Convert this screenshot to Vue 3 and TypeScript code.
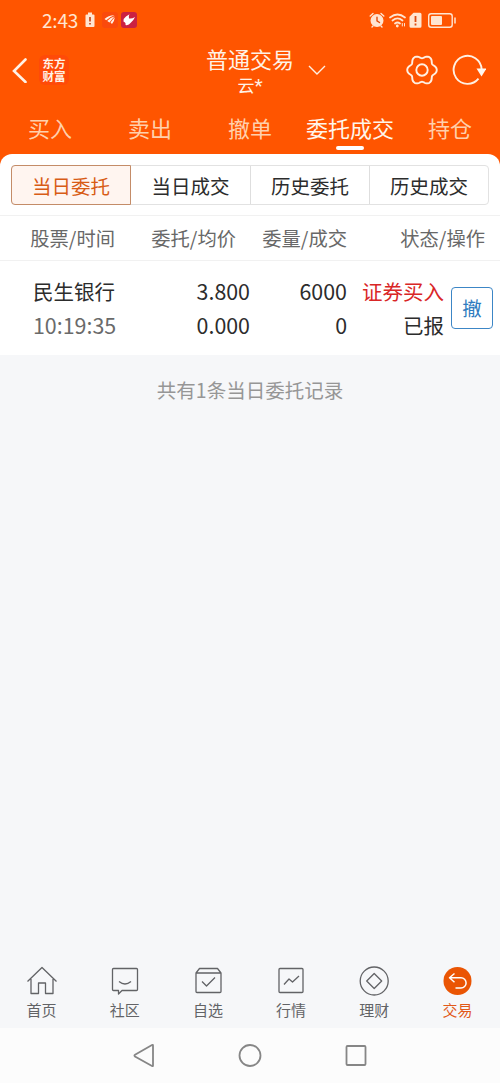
<script setup lang="ts">
interface Tab { label: string; active?: boolean }
interface NavItem { label: string; icon: string; active?: boolean }

const tabs: Tab[] = [
  { label: '买入' },
  { label: '卖出' },
  { label: '撤单' },
  { label: '委托成交', active: true },
  { label: '持仓' },
]
const segments: Tab[] = [
  { label: '当日委托', active: true },
  { label: '当日成交' },
  { label: '历史委托' },
  { label: '历史成交' },
]
const orders = [
  { name: '民生银行', time: '10:19:35', price: '3.800', avg: '0.000', amount: '6000', filled: '0', side: '证券买入', status: '已报' },
]
const nav: NavItem[] = [
  { label: '首页', icon: 'home' },
  { label: '社区', icon: 'chat' },
  { label: '自选', icon: 'box' },
  { label: '行情', icon: 'chart' },
  { label: '理财', icon: 'coin' },
  { label: '交易', icon: 'trade', active: true },
]

// Six-lobed outline of the settings gear, centred on (16, 16)
const gearOutline = 'M' + Array.from({ length: 120 }, (_, i) => {
  const a = (i * Math.PI) / 60
  const r = 13.4 + 1.5 * Math.cos(6 * a) - 0.15 * Math.cos(12 * a)
  return `${(16 + r * Math.cos(a)).toFixed(2)} ${(16 + r * Math.sin(a)).toFixed(2)}`
}).join('L') + 'z'
</script>

<template>
  <div class="screen">
    <header class="top">
      <div class="status">
        <div class="status-left">
          <span class="clock">2:43</span>
          <svg class="s-batt" width="10" height="16" viewBox="0 0 10 16">
            <path d="M3 0.5h4v2h1.500a1 1 0 0 1 1 1v10.500a1 1 0 0 1-1 1h-7a1 1 0 0 1-1-1v-10.500a1 1 0 0 1 1-1h1.500z" fill="#ffe6d2" />
            <path d="M5 5v4.500M5 11v1.600" stroke="#c23c10" stroke-width="1.600" />
          </svg>
          <svg class="s-app" width="16" height="16" viewBox="0 0 16 16">
            <rect width="16" height="16" rx="3" fill="#fa4a0c" />
            <path d="M2.500 7Q6 3.300 12.500 3.200Q7.500 4.800 4.200 8.200zM5.200 9Q8.500 5.500 12.700 4.200Q10 7 7.500 10.500zM8.500 10.500Q10.500 7.500 12.800 5.200Q12.500 9 10 12z" fill="#fff0e4" />
          </svg>
          <svg class="s-app2" width="16" height="16" viewBox="0 0 16 16">
            <rect width="16" height="16" rx="3" fill="#cb2142" />
            <path d="M2.500 9.500Q2.500 6 5 4.500L8.500 2.200Q7 4.500 8 6.500Q11 7 14 5Q12.500 8.500 10 10.500Q7.500 13.800 4.500 13Q5 11.500 4 10.500z" fill="#fff" />
          </svg>
        </div>
        <svg class="status-right" width="90" height="18" viewBox="0 0 90 18">
          <g stroke="#ffe6d2" fill="none" stroke-width="1.400" stroke-linecap="round">
            <circle cx="8" cy="9.500" r="5.800" fill="#ffe6d2" />
            <path d="M1.200 5L4 2.400M14.800 5L12 2.400M4 15l-1 1M12 15l1 1" />
            <path d="M8 6.200V9.800L10.500 11.500" stroke="#e34b0a" />
            <path d="M21 6.500Q28.500 0.500 36 6.500M23.500 9.500Q28.500 5.200 33.500 9.500M26 12.500Q28.500 10.500 31 12.500" stroke-width="1.700" />
            <circle cx="28.300" cy="15" r=".7" fill="#ffe6d2" />
            <path d="M33.300 12.500v2.500M35.500 12.500v2.500" stroke-width="1" />
          </g>
          <path d="M44.500 1.800h6.500a1.500 1.500 0 0 1 1.500 1.500v12a1.500 1.500 0 0 1-1.500 1.500h-9a1.500 1.500 0 0 1-1.500-1.500v-9.500z" fill="#ffe6d2" />
          <path d="M46.500 5v6M46.500 12.500v2" stroke="#dc4a10" stroke-width="1.800" />
          <rect x="59.700" y="2.700" width="23.500" height="13.500" rx="2.500" fill="none" stroke="#ffe6d2" stroke-width="1.400" />
          <rect x="62" y="5" width="11" height="9" rx="1" fill="#ffe6d2" />
          <path d="M86 6.500v6" stroke="#ffe6d2" stroke-width="1.500" />
        </svg>
      </div>

      <div class="titlebar">
        <div class="brand">
          <svg width="17" height="26" viewBox="0 0 17 26"><path d="M14.500 2.500L3 14L14.500 25" fill="none" stroke="#fff2e6" stroke-width="2.600" stroke-linecap="round" /></svg>
          <div class="logo">东方财富</div>
        </div>
        <div class="title"><span class="t1">普通交易</span><span class="t2">云<i>*</i></span></div>
        <svg class="chev" width="18" height="11" viewBox="0 0 18 11"><path d="M1 1L9 9L17 1" fill="none" stroke="#fff0e2" stroke-width="1.400" /></svg>
        <div class="tools">
          <svg width="32" height="32" viewBox="0 0 32 32" fill="none" stroke="#fff0e2" stroke-width="1.900" stroke-linejoin="round">
            <path :d="gearOutline" />
            <circle cx="16" cy="16" r="5.700" />
          </svg>
          <svg width="34" height="32" viewBox="0 0 34 32">
            <path d="M26.500 24.700A14 14 0 1 1 29.600 15" fill="none" stroke="#fff0e2" stroke-width="1.900" />
            <path d="M24.500 14.500h10l-5 8z" fill="#fff8f0" />
          </svg>
        </div>
      </div>

      <nav class="tabs">
        <div v-for="t in tabs" :key="t.label" class="tab" :class="{ active: t.active }">{{ t.label }}</div>
      </nav>
    </header>

    <main class="sheet">
      <div class="segments">
        <div v-for="s in segments" :key="s.label" class="segment" :class="{ active: s.active }">{{ s.label }}</div>
      </div>
      <div class="cols">
        <span>股票/时间</span><span>委托/均价</span><span>委量/成交</span><span>状态/操作</span>
      </div>
      <div v-for="o in orders" :key="o.time" class="order">
        <div class="cell name"><span>{{ o.name }}</span><span class="num muted">{{ o.time }}</span></div>
        <div class="cell num"><span>{{ o.price }}</span><span>{{ o.avg }}</span></div>
        <div class="cell num"><span>{{ o.amount }}</span><span>{{ o.filled }}</span></div>
        <div class="cell"><span class="red">{{ o.side }}</span><span>{{ o.status }}</span></div>
        <button class="cancel">撤</button>
      </div>
    </main>

    <p class="summary">共有{{ orders.length }}条当日委托记录</p>

    <footer class="bottom">
      <div v-for="n in nav" :key="n.label" class="item" :class="{ active: n.active }">
        <svg width="32" height="32" viewBox="0 0 32 32" fill="none" stroke="currentColor" stroke-width="1.300" stroke-linejoin="round">
          <template v-if="n.icon === 'home'">
            <path d="M1.500 16.500L16 2.500L30.500 16.500M5 14V28.500H12.500V18H19.500V28.500H27V14" />
          </template>
          <template v-else-if="n.icon === 'chat'">
            <path d="M4.500 3.500H27.500Q28.500 3.500 28.500 4.500V24.500Q28.500 25.500 27.500 25.500H13L9.500 29V25.500H4.500Q3.500 25.500 3.500 24.500V4.500Q3.500 3.500 4.500 3.500z" />
            <path d="M10 16.500Q16 21.500 22 16.500" />
          </template>
          <template v-else-if="n.icon === 'box'">
            <path d="M4 8L7.500 3.500H25.500L29 8V26.500Q29 27.500 28 27.500H5Q4 27.500 4 26.500zM4 8H29M10 16.500L14.500 21L23 12.500" />
          </template>
          <template v-else-if="n.icon === 'chart'">
            <rect x="4" y="3.500" width="24" height="24" rx="1" />
            <path d="M9 19.500L14 14L17.500 17L24 11" />
          </template>
          <template v-else-if="n.icon === 'coin'">
            <circle cx="16.200" cy="16" r="14" />
            <path d="M16.200 8.500L23.700 16L16.200 23.500L8.700 16z" />
          </template>
          <template v-else>
            <circle cx="16.500" cy="16" r="14" fill="#ea5504" stroke="none" />
            <path d="M13.500 8.500L8.500 12.800L13.500 17.200M8.500 12.800H20A5 5 0 0 1 20 23H14.500" stroke="#fff" stroke-width="1.500" />
          </template>
        </svg>
        <span>{{ n.label }}</span>
      </div>
    </footer>

    <div class="system">
      <svg width="24" height="26" viewBox="0 0 24 26"><path d="M21 3.500V23.500Q21 24.500 20 24L3 14.500Q1.800 13.500 3 12.700L20 3Q21 2.500 21 3.500z" /></svg>
      <svg width="24" height="26" viewBox="0 0 24 26"><circle cx="12" cy="13.500" r="10.500" /></svg>
      <svg width="24" height="26" viewBox="0 0 24 26"><rect x="2.500" y="4" width="19" height="19" rx="1" /></svg>
    </div>
  </div>
</template>

<style>
body { margin: 0; }
</style>

<style scoped>
.screen {
  width: 500px;
  height: 1083px;
  display: flex;
  flex-direction: column;
  overflow: hidden;
  background: #f6f7f9;
  color: #2c2c2c;
  font-family: "Noto Sans CJK SC", sans-serif;
}
.screen * { box-sizing: border-box; }
.top {
  height: 170px;
  flex: none;
  background: #ff5500;
  color: #fff2e6;
}
.status {
  height: 40px;
  display: flex;
  justify-content: space-between;
  padding: 0 41px 0 42px;
  align-items: center;
}
.status-left { display: flex; align-items: center; }
.clock { font-size: 19px; line-height: 40px; width: 43px; color: #ffe6d2; letter-spacing: -0.200px; }
.s-app { margin-left: 7px; }
.s-app2 { margin-left: 3px; }
.titlebar {
  height: 64px;
  display: grid;
  grid-template-columns: 190px 120px 85px 1fr;
  align-items: center;
}
.brand { display: flex; align-items: center; padding: 0 0 4px 11px; gap: 11px; }
.logo {
  width: 30px;
  height: 30px;
  border-radius: 6px;
  background: #ff4a08;
  padding: 2px 3px;
  font-size: 11.500px;
  line-height: 13px;
  font-weight: 700;
  text-align: center;
}
.title { display: flex; flex-direction: column; align-items: center; padding-bottom: 4px; }
.t1 { font-size: 22px; line-height: 30px; }
.t2 { font-size: 17px; line-height: 24px; }
.t2 i { font: 19px/20px Roboto, sans-serif; }
.chev { margin: 0 0 3px -2px; }
.tools { display: flex; gap: 14px; padding: 0 0 4px 11px; }
.tabs { display: grid; grid-template-columns: repeat(5, 1fr); height: 50px; }
.tab {
  position: relative;
  text-align: center;
  font-size: 22px;
  line-height: 47px;
  white-space: nowrap;
  color: #ffd0ac;
}
.tab.active { color: #fff5eb; }
.tab.active::after {
  content: "";
  position: absolute;
  left: 36px;
  top: 42px;
  width: 28px;
  height: 4px;
  border-radius: 2px;
  background: #fff;
}
.sheet {
  height: 201px;
  flex: none;
  margin-top: -16px;
  border-radius: 12px 12px 0 0;
  background: #fff;
  padding-top: 11px;
}
.segments {
  margin: 0 11px;
  height: 40px;
  display: grid;
  grid-template-columns: 119px 120px 119px 1fr;
  border: 1px solid #e2e2e2;
  border-radius: 4px;
}
.segment {
  height: 38px;
  text-align: center;
  font-size: 19.500px;
  line-height: 39px;
  border-right: 1px solid #dedede;
}
.segment:last-child { border-right: 0; }
.segment.active {
  height: 40px;
  margin: -1px 0 0 -1px;
  border: 1px solid #c48c68;
  border-radius: 4px 0 0 4px;
  background: #fff5f0;
  color: #d85c16;
}
.cols {
  margin-top: 10px;
  height: 46px;
  border-top: 1px solid #f1f1f1;
  border-bottom: 1px solid #f1f1f1;
  display: grid;
  grid-template-columns: 85px 121px 111px 138px;
  padding-left: 30px;
  font-size: 19.300px;
  line-height: 45px;
  color: #686868;
  white-space: nowrap;
}
.cols span { text-align: right; }
.order {
  height: 94px;
  display: grid;
  grid-template-columns: 115px 135px 97px 97px 49px;
  align-items: start;
  padding-top: 13px;
}
.cell { display: flex; flex-direction: column; text-align: right; font-size: 20.500px; line-height: 34px; }
.name { text-align: left; padding-left: 33px; white-space: nowrap; }
.num { font-size: 21.400px; }
.muted { color: #6a6a6a; }
.red { color: #d92626; }
.cancel {
  justify-self: end;
  margin-top: 13px;
  width: 42px;
  height: 42px;
  padding: 0;
  border: 1.500px solid #3c86c6;
  border-radius: 4px;
  background: #fff;
  color: #2f7cc0;
  font: 19.500px/40px "Noto Sans CJK SC", sans-serif;
}
.summary {
  margin: 0;
  flex: 1;
  padding-top: 20px;
  text-align: center;
  font-size: 19.500px;
  line-height: 29px;
  color: #969696;
}
.bottom {
  height: 63px;
  display: grid;
  grid-template-columns: repeat(6, 1fr);
  padding-right: 1px;
  color: #626366;
}
.item { display: flex; flex-direction: column; align-items: center; font-size: 15px; line-height: 26px; }
.item svg { flex: none; }
.item.active { color: #e2591a; }
.system {
  height: 55px;
  background: #fcfcfc;
  display: flex;
  justify-content: center;
  gap: 82px;
  padding-top: 14px;
}
.system svg { fill: none; stroke: #868686; stroke-width: 1.800; }
</style>
